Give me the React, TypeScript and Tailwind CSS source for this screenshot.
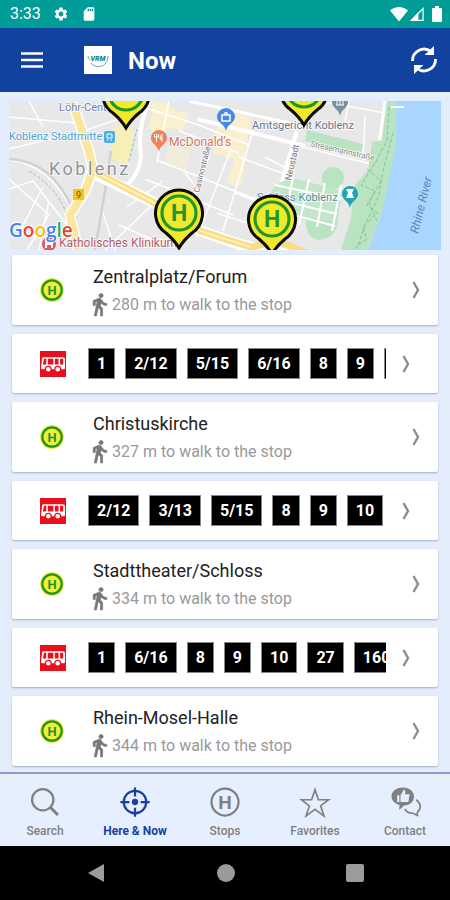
import type { ReactNode } from "react";
import { MdSdCard, MdSettings } from "react-icons/md";

interface Stop {
  name: string;
  distance: number;
  lines: string[];
}

const STOPS: Stop[] = [
  { name: "Zentralplatz/Forum", distance: 280, lines: ["1", "2/12", "5/15", "6/16", "8", "9", "10"] },
  { name: "Christuskirche", distance: 327, lines: ["2/12", "3/13", "5/15", "8", "9", "10"] },
  { name: "Stadttheater/Schloss", distance: 334, lines: ["1", "6/16", "8", "9", "10", "27", "160"] },
  { name: "Rhein-Mosel-Halle", distance: 344, lines: [] },
];

function StatusBar() {
  return (
    <div className="flex h-7 shrink-0 items-center justify-between bg-[#009c98] pl-2.5 pr-2 text-white">
      <div className="flex items-center gap-3">
        <span className="text-base leading-7">3:33</span>
        <MdSettings className="h-4 w-4" />
        <MdSdCard className="h-4 w-4" />
      </div>
      <div className="flex items-center gap-0.5">
        <svg viewBox="0 0 18 15" className="h-4 w-[18px]" fill="currentColor">
          <path d="M9 15 0 4C5-.8 13-.8 18 4Z" />
        </svg>
        <svg viewBox="0 0 15 15" className="h-4 w-3.5" fill="none" stroke="currentColor">
          <path d="M0 15 9 5.500V15Z" fill="currentColor" stroke="none" />
          <path d="M1.500 14.300 14 1.600V14.300Z" strokeWidth="1.300" />
        </svg>
        <svg viewBox="0 0 10 16" className="ml-1.5 h-4 w-2.5" fill="currentColor">
          <path d="M3 0h4v2h2q1 0 1 1v12q0 1-1 1H1q-1 0-1-1V3q0-1 1-1h2Z" />
        </svg>
      </div>
    </div>
  );
}

function AppLogo() {
  return (
    <svg viewBox="0 0 28 28" className="h-7 w-7" aria-hidden="true">
      <rect width="28" height="28" fill="#fff" />
      <text x="14" y="15" textAnchor="middle" fontSize="7" fontWeight="900" fontStyle="italic" fill="#14838d">VRM</text>
      <path d="M4 10q0 3 2 4M7 17c4 6 17 5 17-7" fill="none" stroke="#7c98b8" />
    </svg>
  );
}

function Header() {
  return (
    <header className="flex h-16 shrink-0 items-center bg-[#1142a0] pl-5 pr-3 text-white">
      <button type="button" aria-label="Menu" className="flex h-6 w-6 items-center justify-center">
        <svg viewBox="0 0 22 16" className="w-[22px]" fill="none" stroke="currentColor" strokeWidth="2.400">
          <path d="M0 1.500h22M0 8h22M0 14.500h22" />
        </svg>
      </button>
      <div className="ml-10">
        <AppLogo />
      </div>
      <h1 className="ml-4 flex-1 pt-0.5 text-2xl font-bold">Now</h1>
      <button type="button" aria-label="Refresh">
        <svg viewBox="0 0 28 30" className="h-8 w-7" fill="none" stroke="currentColor" strokeWidth="2.800">
          <path d="M2.500 16A11.500 11.500 0 0 1 21 6.500M25.500 14A11.500 11.500 0 0 1 7 23.500" />
          <path d="M24 1v9h-9.500ZM4 29v-9h9.500Z" fill="currentColor" stroke="none" />
        </svg>
      </button>
    </header>
  );
}

function MapPin({ x, y }: { x: number; y: number }) {
  return (
    <g transform={`translate(${x} ${y})`}>
      <path
        d="M0 35C-4 28-7 25-13 20A23.500 23.500 0 1 1 13 20C7 25 4 28 0 35Z"
        fill="#f3e92c"
        stroke="#0d0d08"
        strokeWidth="3"
      />
      <circle r="17" fill="none" stroke="#20972b" strokeWidth="3.200" />
      <text y="8" textAnchor="middle" fontSize="23" fontWeight="700" fill="#20972b">H</text>
    </g>
  );
}

function StopMap() {
  return (
    <svg viewBox="0 0 432 149" preserveAspectRatio="xMidYMid slice" className="block w-full" role="img" aria-label="Map">
      <rect width="432" height="149" fill="#e8e8e8" />
      {/* built-up areas */}
      <g fill="#fbf0cd">
        <path d="m137 0 22 2 7 8 14 2-6 18-14-3-12 9-9-11 5-12Z" />
        <path d="m105 24 20 4-6 36-17-6Z" fill="#f6efb8" />
        <path d="m210 10 32 6-10 70-14-4 7-24-21-6Z" />
        <path d="m160 42 22 8-6 20-20-7Z" opacity=".5" />
      </g>
      {/* streets */}
      <g fill="none" stroke="#fff" strokeWidth="1.500">
        <path d="M0 48 74 30 140 8M0 16l68 6M20 0l14 26M0 59q40 4 63 50M0 88l24-8 40 52M12 128l22-42M0 78l40 36-22 35M40 100 30 149M92 106l14 43M96 149l48-46M150 60l86 34 60 20M136 78l88 36M200 56l-24 62M222 48l-34 88M244 30l-30 100M176 72l14 18M140 8l50 16 50 20M160 0l-12 62M170 30l60 22M110 124l46 20M118 106l36-26M310 0l66 12M340 0l-4 20M290 45l80 20M256 56l30 16M230 56l48 18M226 92l58 22M208 112l48 16M356 14l-2 46" />
        <path d="M140 0q-12 28-8 55-2 20-16 30M188 18 296 45M288 30l-24 80" strokeWidth="4" />
        <path d="M180 0 290 24 298 26M376 0l-8 58-66-18" strokeWidth="3" />
      </g>
      <path d="M102 50 96 90 86 149M0 58q48 2 68 62" fill="none" stroke="#cfd1d3" strokeWidth="2.500" />
      <path d="M20 70q28 16 38 44M128 28l-8 32" fill="none" stroke="#8fc7a0" strokeDasharray="3 2" />
      {/* main roads */}
      <g fill="none" strokeLinejoin="round">
        <path d="M62 0l5 12 13 38 4 18-8 22-15 24 8 35M84 72l58 28 50 30 40 14 50 10" stroke="#fff" strokeWidth="11" />
        <path d="M62 0l5 12 13 38 4 18-8 22-15 24 8 35" stroke="#f9e7a0" strokeWidth="8" />
        <path d="M88 72l54 28 50 30 24 8 26 8 26-6 30 12" stroke="#f8dd86" strokeWidth="7" />
        <path d="M88 72l54 28 50 30 24 8 26 8" stroke="#fdf1bd" strokeWidth="2" />
      </g>
      {/* park */}
      <g fill="#b9e3c1">
        <path d="m298 29 56 14-2 10-56-13Z" />
        <path d="M262 92q4-14 26-14l45 12-5 35-45-8-24-8Z" opacity=".8" />
        <circle cx="324" cy="77" r="11" />
        <path d="M297 118q26-1 31 8-5 12-18 13-14-2-13-21Z" />
        <path d="M378 0h9v41l-4 27-10 43-14 38h-27l10-32 3-32 14-16 4-28 10-2Z" />
      </g>
      <path d="m266 84 66 14M262 97l66 16M258 107l68 18M284 76l-8 42M300 78l-10 46M316 82l-8 44M332 84l-9 46" fill="none" stroke="#fff" strokeWidth="2" />
      <path
        d="m380 6-2 34-12 22-14 22 14 6-8 14 10 8-14 14 4 12-12 8M384 32l-10 38-4 24-14 30-8 24M358 68l14 12-12 22 8 18"
        fill="none"
        stroke="#82c593"
        strokeDasharray="4 2"
      />
      <path d="M387 0h45v149h-73l14-38 9-43 5-27Z" fill="#a9d6fe" />
      <path d="M382 6h13" stroke="#fff" strokeWidth="2" />
      {/* labels */}
      <g fontSize="12" stroke="#fff" strokeWidth="2" paintOrder="stroke" strokeOpacity=".7">
        <text x="50" y="10" fontSize="11" fill="#7182ad">Löhr-Center</text>
        <text x="0" y="39" fontSize="11" fill="#4f9fd6">Koblenz Stadtmitte</text>
        <text x="160" y="45" fill="#d9765a">McDonald&rsquo;s</text>
        <text x="243" y="28" fontSize="11" fill="#68788a">Amtsgericht Koblenz</text>
        <text x="248" y="100" fontSize="11" fill="#51909b">Schloss Koblenz</text>
        <text x="50" y="146" fill="#b0606c">Katholisches Klinikum</text>
        <text x="40" y="74" fontSize="18" letterSpacing="2.500" fill="#8f949b">Koblenz</text>
        <text transform="translate(190 92) rotate(-76)" fontSize="8" fill="#777">Casinostraße</text>
        <text transform="translate(282 80) rotate(-77)" fontSize="9" fill="#777">Neustadt</text>
        <text transform="translate(301 45) rotate(13)" fontSize="8" fill="#7d8a80">Stresemannstraße</text>
      </g>
      <text transform="translate(409 133) rotate(-76)" fontSize="12" fontStyle="italic" fill="#5b87c0">Rhine River</text>
      {/* places */}
      <rect x="95" y="30" width="11" height="12" rx="2" fill="#4babe2" />
      <path d="M98 33h5v4h-5ZM98 39h1.500M101.500 39h1.500" fill="none" stroke="#fff" />
      <rect x="64" y="88" width="11" height="11" fill="#f2c31d" />
      <text x="69.500" y="97" textAnchor="middle" fontSize="9" fill="#67501b">9</text>
      <path d="M150 51c-1-7-8-8-8-14a8 8 0 1 1 16 0c0 6-7 7-8 14Z" fill="#f18156" />
      <path d="M147.500 33v8M145.500 33v3h4v-3M153 41v-8q-2 2-2 5h2" fill="none" stroke="#fff" />
      <path d="M217 30c-1-7-9-8-9-14a9 9 0 1 1 18 0c0 6-8 7-9 14Z" fill="#4a87e8" />
      <path d="M213 14h8v6h-8ZM215 14q2-5 4 0" fill="none" stroke="#fff" strokeWidth="1.500" />
      <path d="M331 15c-1-7-8-8-8-14a8 8 0 1 1 16 0c0 6-7 7-8 14Z" fill="#76919d" />
      <path d="M327 4h8M328 0v4M331 0v4M334 0v4" stroke="#fff" />
      <path d="M341 107c-1-7-8-8-8-14a8 8 0 1 1 16 0c0 6-7 7-8 14Z" fill="#1fa4b5" />
      <path d="M337 88h8l-2 4 2 5h-8l2-5Z" fill="#fff" />
      <circle cx="40" cy="143" r="7" fill="#df5666" />
      <path d="M37 139v8M43 139v8M37 143h6" stroke="#fff" strokeWidth="2" />
      <MapPin x={117} y={-8} />
      <MapPin x={295} y={-11} />
      <MapPin x={170} y={112} />
      <MapPin x={263} y={118} />
      <text x="0" y="136" fontFamily="Open Sans, sans-serif" fontSize="19" fontWeight="600" stroke="#fff" strokeWidth="2" paintOrder="stroke">
        <tspan fill="#4285f4">G</tspan>
        <tspan fill="#ea4335">o</tspan>
        <tspan fill="#fbbc05">o</tspan>
        <tspan fill="#4285f4">g</tspan>
        <tspan fill="#34a853">l</tspan>
        <tspan fill="#ea4335">e</tspan>
      </text>
    </svg>
  );
}

function StopSign() {
  return (
    <svg viewBox="0 0 26 26" className="h-6 w-6 shrink-0" aria-hidden="true">
      <circle cx="13" cy="13" r="13" fill="#f0ee35" />
      <circle cx="13" cy="13" r="10.500" fill="none" stroke="#20922a" strokeWidth="2.400" />
      <text x="13" y="18" textAnchor="middle" fontSize="14" fontWeight="700" fill="#20922a">H</text>
    </svg>
  );
}

function BusIcon() {
  return (
    <svg viewBox="0 0 25 25" className="h-[26px] w-[26px] shrink-0" aria-hidden="true">
      <rect width="25" height="25" fill="#e90f1b" />
      <path d="M3 6h19q2 0 2 2v8q0 1.500-1 1.500H2q-1 0-1-1.500l1-8.500q0-1.500 1-1.500Z" fill="#fff" />
      <path d="M3.800 7.500H6V13H2.800ZM7.500 7.500h5.300V13H7.500ZM14.300 7.500h3.500V13h-3.500ZM19.300 7.500h3V13h-3Z" fill="#e90f1b" />
      <g fill="#fff" stroke="#e90f1b" strokeWidth="1.200">
        <circle cx="8" cy="17.500" r="2.800" />
        <circle cx="17" cy="17.500" r="2.800" />
      </g>
    </svg>
  );
}

function WalkIcon() {
  return (
    <svg viewBox="5 1 15 23" className="mr-1 h-6 w-4 shrink-0 text-[#777]" fill="currentColor" stroke="currentColor" strokeWidth=".6" aria-hidden="true">
      <circle cx="13.500" cy="3.500" r="2" />
      <path d="M9.800 8.900 7 23h2.100l1.800-8 2.100 2v6h2v-7.500l-2.100-2 .6-3C14.800 12 16.800 13 19 13v-2c-1.900 0-3.500-1-4.300-2.400l-1-1.600c-.4-.6-1-1-1.700-1-.3 0-.5.1-.8.1L6 8.300V13h2V9.600Z" />
    </svg>
  );
}

function Chevron() {
  return (
    <svg viewBox="0 0 8 18" className="h-[18px] w-2 shrink-0 text-[#8c8c8c]" fill="none" stroke="currentColor" strokeWidth="2.400" aria-hidden="true">
      <path d="m1.500 1 4.500 8-4.500 8" />
    </svg>
  );
}

function StopCard({ stop }: { stop: Stop }) {
  return (
    <button type="button" className="flex w-full items-center rounded-xs bg-white py-1 pl-7 pr-[18px] text-left shadow-[0_1px_2px_#9fb0c4]">
      <StopSign />
      <span className="ml-7 flex-1 pt-1.5">
        <span className="block pl-px text-lg leading-6 text-[#222]">{stop.name}</span>
        <span className="flex items-center text-base leading-8 text-[#999]">
          <WalkIcon />
          {stop.distance} m to walk to the stop
        </span>
      </span>
      <Chevron />
    </button>
  );
}

function LinesCard({ lines }: { lines: string[] }) {
  return (
    <button type="button" className="flex w-full items-center rounded-xs bg-white py-3.5 pl-7 pr-7 text-left shadow-[0_1px_2px_#9fb0c4]">
      <BusIcon />
      <span className="ml-[22px] mr-4 flex min-w-0 flex-1 gap-2.5 overflow-hidden">
        {lines.map((line) => (
          <span key={line} className="shrink-0 border border-[#888] bg-black px-2 text-base font-bold leading-[29px] text-white">
            {line}
          </span>
        ))}
      </span>
      <Chevron />
    </button>
  );
}

function Tab({ label, active = false, children }: { label: string; active?: boolean; children: ReactNode }) {
  return (
    <a href="#" className={`flex flex-1 flex-col items-center gap-[3px] pt-2.5 ${active ? "text-[#1a409e]" : "text-[#808080]"}`}>
      <svg viewBox="0 0 32 32" className="h-9 w-9" fill="none" stroke="currentColor" strokeWidth="2" aria-hidden="true">
        {children}
      </svg>
      <span className={`text-xs ${active ? "font-bold" : "font-medium"}`}>{label}</span>
    </a>
  );
}

function TabBar() {
  return (
    <nav className="flex h-[74px] shrink-0 border-t-2 border-[#8e9ccd] bg-[#e6effd]">
      <Tab label="Search">
        <circle cx="14" cy="14" r="9.500" />
        <path d="m20.500 20.500 7 7" strokeWidth="2.600" />
      </Tab>
      <Tab label="Here &amp; Now" active>
        <circle cx="16" cy="16" r="10" />
        <circle cx="16" cy="16" r="2.800" fill="currentColor" stroke="none" />
        <path d="M16 3v8M16 21v8M3 16h8M21 16h8" />
      </Tab>
      <Tab label="Stops">
        <circle cx="16" cy="16" r="12" />
        <text x="16" y="22" textAnchor="middle" fontSize="17" fontWeight="700" fill="currentColor" stroke="none">H</text>
      </Tab>
      <Tab label="Favorites">
        <path d="m16 5 3 9h9l-7 5.500 3 9-8-6-8 6 3-9L4 14h9Z" strokeWidth="1.500" />
      </Tab>
      <Tab label="Contact">
        <path d="M14 3c6.500 0 10 4 10 8s-3 8-9 8l-4 4v-4.500C7 17.500 4 14.500 4 11c0-4 3.500-8 10-8Z" fill="currentColor" stroke="none" />
        <path d="M26 14c5 4 4 9 1 11v3l-4-2q-6 0-7-4" strokeWidth="1.500" />
        <path d="M9 10h2v6H9ZM12 10l3-5q2 0 1 4h4l-1 7h-7Z" fill="#e6effd" stroke="none" />
      </Tab>
    </nav>
  );
}

function SystemNav() {
  return (
    <div className="flex h-[54px] shrink-0 items-center justify-around bg-black px-[30px] text-[#9b9b9b]">
      <button type="button" aria-label="Back">
        <svg viewBox="0 0 18 20" className="h-5 w-5" fill="currentColor"><path d="M1 10 17 1v18Z" /></svg>
      </button>
      <button type="button" aria-label="Home" className="h-[18px] w-[18px] rounded-full bg-current" />
      <button type="button" aria-label="Recent apps" className="h-[18px] w-[18px] rounded-xs bg-current" />
    </div>
  );
}

export default function App() {
  return (
    <div className="flex h-screen flex-col bg-[#e4edfc] font-[Roboto,sans-serif]">
      <StatusBar />
      <Header />
      <main className="min-h-0 flex-1 overflow-hidden pt-[9px]">
        <div className="px-[9px]">
          <StopMap />
        </div>
        <div className="flex flex-col gap-[9px] px-3 pt-[5px]">
          {STOPS.map((stop) => (
            <div key={stop.name} className="flex flex-col gap-[9px]">
              <StopCard stop={stop} />
              {stop.lines.length > 0 && <LinesCard lines={stop.lines} />}
            </div>
          ))}
        </div>
      </main>
      <TabBar />
      <SystemNav />
    </div>
  );
}
